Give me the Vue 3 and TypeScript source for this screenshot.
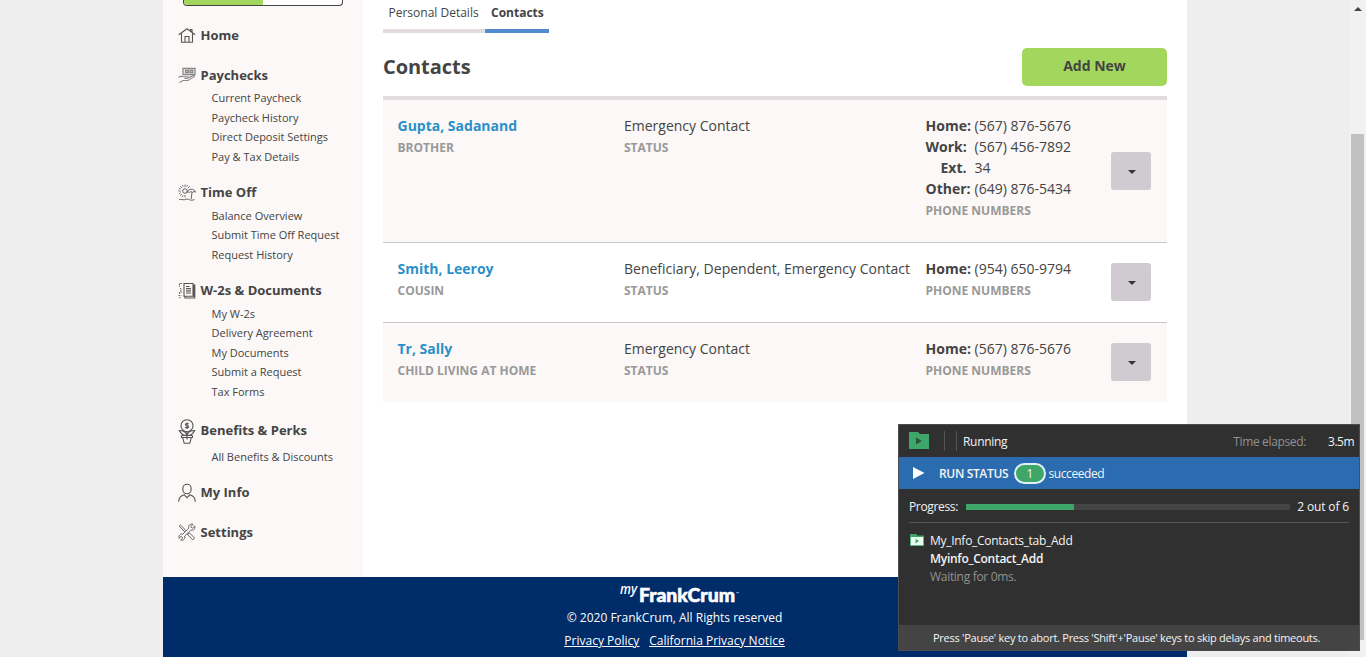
<script setup lang="ts">
interface NavSection { title: string; icon: string; links: string[] }
interface Phone { label: string; value: string; indent?: boolean }
interface Contact { name: string; relation: string; status: string; phones: Phone[] }

const sections: NavSection[] = [
  { title: 'Home', icon: 'home', links: [] },
  { title: 'Paychecks', icon: 'pay', links: ['Current Paycheck', 'Paycheck History', 'Direct Deposit Settings', 'Pay & Tax Details'] },
  { title: 'Time Off', icon: 'time', links: ['Balance Overview', 'Submit Time Off Request', 'Request History'] },
  { title: 'W-2s & Documents', icon: 'docs', links: ['My W-2s', 'Delivery Agreement', 'My Documents', 'Submit a Request', 'Tax Forms'] },
  { title: 'Benefits & Perks', icon: 'perks', links: ['All Benefits & Discounts'] },
  { title: 'My Info', icon: 'info', links: [] },
  { title: 'Settings', icon: 'tools', links: [] },
]

const contacts: Contact[] = [
  {
    name: 'Gupta, Sadanand', relation: 'BROTHER', status: 'Emergency Contact',
    phones: [
      { label: 'Home:', value: '(567) 876-5676' },
      { label: 'Work:', value: '(567) 456-7892' },
      { label: 'Ext.', value: '34', indent: true },
      { label: 'Other:', value: '(649) 876-5434' },
    ],
  },
  { name: 'Smith, Leeroy', relation: 'COUSIN', status: 'Beneficiary, Dependent, Emergency Contact', phones: [{ label: 'Home:', value: '(954) 650-9794' }] },
  { name: 'Tr, Sally', relation: 'CHILD LIVING AT HOME', status: 'Emergency Contact', phones: [{ label: 'Home:', value: '(567) 876-5676' }] },
]
</script>

<template>
  <div class="screen">
    <div class="page">
      <div class="body">
        <aside class="sidebar">
          <div class="toggle"><span></span></div>
          <nav>
            <section v-for="s in sections" :key="s.title" class="group">
              <div class="title" :class="s.icon">
                <svg v-if="s.icon === 'home'" width="18" height="16" viewBox="0 0 18 16"><path d="M.8 7.800 9 1.800l8.200 6M3.500 6.500v8.700h11V6.500M7 15V9.500h4V15M12.500 4V2.500h1.500V5" /></svg>
                <svg v-else-if="s.icon === 'pay'" width="18" height="16" viewBox="0 0 18 16"><path class="gray" d="M5 1.500h12v6H5zM7.500 3.500h2.800v2H7.500zM12 3.500h2.800v2H12z" stroke-width="1.300" /><path class="gray" d="M.5 10.500c2-1.800 3-1.300 5-.8h4c1.500.2 1 1.700-.5 1.700H6.500M10 11l5-2.500c1.500-.5 2 .7.800 1.400L10 13.500H5L1.500 15.500" /></svg>
                <svg v-else-if="s.icon === 'time'" width="18" height="17" viewBox="0 0 18 17"><circle cx="7" cy="7" r="2.300" stroke-width=".9" /><path d="M7 .5v2.500M7 11v2.500M.3 7h2.500M2.200 2.200l1.800 1.800M11.800 2.200 10 4M2.200 11.800 4 10M4.500.9l.8 1.700M9.500.9l-.8 1.700M1 4.400l1.700.8M1 9.600l1.700-.8M4.300 13l.9-1.700" stroke-width=".8" /><path d="M9 8.500c.5-4 7.500-4.500 8.500-.3-1-.8-2-.8-2.800.2-1-1-2.200-1-3 0-1-.7-1.800-.6-2.700.1M14 8l-.8 7M1 15.700c2-1 3.500.5 5.500 0s3.500-1 5 0 3 .3 5 0" stroke-width=".9" /></svg>
                <svg v-else-if="s.icon === 'docs'" width="18" height="17" viewBox="0 0 18 17"><path d="M6 1.500H15v12.800H6zM15 3h1.800v13H7v-1.500M16 3v12" /><path d="M8 4.500h3.500M8 6.700h5M8 8.800h5M8 11h5" stroke-width="1.200" /><path d="M4 1.500H1.500v3.500M2 6.500c2-.5 2 2.500 0 2M4 10H1.500v2M.5 13.500h3M1 15.700h1.500" stroke-width=".9" stroke-dasharray="1.800 .8" /></svg>
                <svg v-else-if="s.icon === 'perks'" width="18" height="26" viewBox="0 0 18 26"><circle cx="9" cy="7.700" r="6" /><path d="M10.700 6C9.600 5.200 7.400 5.300 7.400 6.500s3.200 1 3.200 2.300-2.300 1.400-3.400.5M9 4.500v6.500M9 14v7.500M9 17.500c-3.800.2-5.800-1-7.700-5 3.700-.1 6.600 1 7.700 5Zm0 0c3.800.2 5.800-1 7.700-5-3.700-.1-6.600 1-7.700 5ZM3.500 17.500h3M11.500 17.500h3M3.500 17.500v2h11v-2M4.700 19.700l1.500 5.600h5.600l1.500-5.600" /></svg>
                <svg v-else-if="s.icon === 'info'" width="18" height="20" viewBox="0 0 18 20"><rect x="4.900" y="2.200" width="8.200" height="9.600" rx="4" /><path d="M.7 19.800c0-4.500 2-6 5.600-7l2.700 2.800 2.700-2.800c3.600 1 5.600 2.500 5.600 7" /></svg>
                <svg v-else width="18" height="18" viewBox="0 0 18 18"><path d="M1.200 3.200 2.400 2 7 6.500 8.200 8M9.800 11l1.800-1 5 5-1.800 1.900-5-5zM1.200 3.200 6.800 9M16.700 3l-2.400 2.300-1.600-1.500L15 1.300c-3-.8-5 1.300-4.200 3.800l-6 6C2.400 10.500.3 12.300 1.100 15.300l2.100-2 1.600 1.700-2.100 2c3 .7 4.600-1.300 4-4l6-5.800c3 .5 4.800-1.200 4-4.200Z" stroke-width=".9" /></svg>
                <span>{{ s.title }}</span>
              </div>
              <a v-for="l in s.links" :key="l">{{ l }}</a>
            </section>
          </nav>
        </aside>
        <main>
          <div class="tabs"><span class="tab">Personal Details</span><span class="tab active">Contacts</span></div>
          <header><h1>Contacts</h1><button class="add">Add New</button></header>
          <div class="list">
            <article v-for="c in contacts" :key="c.name">
              <div class="who"><b>{{ c.name }}</b><small>{{ c.relation }}</small></div>
              <div class="status"><p>{{ c.status }}</p><small>STATUS</small></div>
              <div class="phones">
                <p v-for="p in c.phones" :key="p.label"><strong :class="{ indent: p.indent }">{{ p.label }}</strong><span>{{ p.value }}</span></p>
                <small>PHONE NUMBERS</small>
              </div>
              <button class="drop"><i></i></button>
            </article>
          </div>
        </main>
      </div>
      <footer>
        <svg class="logo" width="124" height="24" viewBox="0 0 124 24">
          <text x="1" y="12" class="my" textLength="17" lengthAdjust="spacingAndGlyphs">my</text>
          <text x="20" y="20" class="brand" textLength="96" lengthAdjust="spacingAndGlyphs">FrankCrum</text>
          <text x="117" y="13" class="tm">™</text>
        </svg>
        <div class="copy">© 2020 FrankCrum, All Rights reserved</div>
        <div class="legal"><a>Privacy Policy</a><a>California Privacy Notice</a></div>
      </footer>
    </div>
    <div class="scrollbar"><i class="up"></i><div class="thumb"></div></div>

    <div class="runner">
      <div class="bar">
        <svg width="20" height="17" viewBox="0 0 20 17"><path d="M0 0h9l2 2h9v15H0z" fill="#3fa66a" /><path d="M7 5.500v7l6-3.500z" fill="#28563a" /></svg>
        <i class="sep first"></i><i class="sep"></i>
        <span class="running">Running</span><span class="elapsed">Time elapsed:</span><span class="mins">3.5m</span>
      </div>
      <div class="run-status">
        <svg width="12" height="12" viewBox="0 0 12 12"><path d="M0 0v12l11.500-6z" fill="#fff" /></svg>
        <span class="rs">RUN STATUS</span><span class="count">1</span><span class="ok">succeeded</span>
      </div>
      <div class="progress"><span class="pl">Progress:</span><div class="track"><div></div></div><span class="pc">2 out of 6</span></div>
      <div class="task">
        <svg width="14" height="12" viewBox="0 0 14 12"><path d="M0 0h6l1.500 1.500H14V12H0z" fill="#3fa66a" /><path d="M.8 3h12.400v8.200H.8z" fill="#e9fff0" /><path d="M5.500 4.800v4.600L9 7.100z" fill="#3fa66a" /></svg>
        <div><p class="t1">My_Info_Contacts_tab_Add</p><p class="t2">Myinfo_Contact_Add</p><p class="t3">Waiting for 0ms.</p></div>
      </div>
      <div class="hint"><span>Press 'Pause' key to abort. Press 'Shift'+'Pause' keys to skip delays and timeouts.</span></div>
    </div>
  </div>
</template>

<style>
html, body { margin: 0; overflow: hidden; }
</style>

<style scoped>
* { box-sizing: border-box; }
.screen { position: relative; display: flex; width: 1366px; height: 657px; overflow: hidden; background: #eee; font-family: "Open Sans", sans-serif; color: #444; }
.page { width: 1024px; margin-left: 163px; height: 657px; background: #fff; display: flex; flex-direction: column; }
.body { display: flex; height: 577px; }
p, h1 { margin: 0; }
button { border: 0; padding: 0; font: inherit; color: inherit; }
.sidebar { width: 200px; background: #fbf8f7; }
.toggle { margin-left: 20px; width: 160px; height: 6px; border: 1px solid #444; border-top: 0; border-radius: 0 0 4px 4px; overflow: hidden; background: #fff; }
.toggle span { display: block; width: 79px; height: 6px; background: #a3d65c; }
nav { padding-top: 19.200px; }
.group { padding-bottom: 15.900px; }
.title { display: flex; align-items: center; height: 20px; margin-bottom: 3.600px; padding-left: 15px; font-size: 13px; font-weight: 700; line-height: 20px; white-space: nowrap; }
.title.perks { height: 26px; }
.title svg { flex: none; margin-right: 4.500px; fill: none; stroke: #555; stroke-width: 1.1; }
.title.perks svg { margin: 1px 4.500px 0 0; }
.title .gray { stroke: #888; }
.group a { display: block; height: 19.500px; line-height: 19.500px; padding-left: 48.500px; font-size: 11px; white-space: nowrap; }
main { padding: 0 20px; width: 824px; }
.tabs { display: flex; height: 33px; font-size: 12px; line-height: 26px; }
.tab { width: 102px; padding-left: 5.500px; border-bottom: 4px solid #e3dcde; white-space: nowrap; }
.tab.active { width: 64px; padding-left: 6px; font-weight: 700; border-color: #508ccf; }
header { display: flex; justify-content: space-between; height: 63px; padding-top: 15px; }
h1 { font-size: 20px; line-height: 37px; font-weight: 700; letter-spacing: -.05px; }
.add { width: 145px; height: 38px; border-radius: 5px; background: #a3d65c; font-size: 14px; font-weight: 700; line-height: 34px; padding-bottom: 2px; }
.list { border-top: 4px solid #e3dcde; }
article { display: grid; grid-template-columns: 226.500px 301.500px 185.500px 40px; padding: 15px 0 0 14.500px; height: 80px; border-bottom: 1px solid #c9c7c9; font-size: 14px; line-height: 21px; white-space: nowrap; }
article:nth-child(odd) { background: #fbf8f7; }
article:first-child { height: 143px; }
article:last-child { height: 79px; border-bottom: 0; }
article b { display: block; color: #2b90c8; }
small { display: block; font-size: 12px; font-weight: 700; color: #999; line-height: 22px; padding-top: 1px; }
.phones p { display: flex; }
.phones strong { width: 49px; flex: none; }
.phones strong.indent { padding-left: 15px; }
.drop { width: 40px; height: 38px; margin-top: 5px; border-radius: 3px; background: #d0cbd0; display: flex; align-items: center; justify-content: center; }
article:first-child .drop { margin-top: 37px; }
.drop i { border: 4.500px solid transparent; border-top-color: #333; border-bottom: 0; margin: 1px 0 0 1px; }
footer { height: 80px; background: #002c6a; color: #fff; text-align: center; padding-top: 5px; font-size: 12px; display: flex; flex-direction: column; align-items: center; }
.logo { display: block; flex: none; margin-left: 11px; overflow: visible; }
.logo text { fill: #fff; }
.my { font: italic 600 14px "Open Sans", sans-serif; }
.brand { font: 900 19.5px Lato, sans-serif; stroke: #fff; stroke-width: .6; }
.tm { font: 4px Lato, sans-serif; }
.copy { line-height: 23px; margin-left: -1px; }
.legal { display: flex; gap: 10px; line-height: 23px; margin-left: -1px; text-decoration: underline; }
.legal a { text-decoration: underline; }
.scrollbar { margin-left: auto; width: 17px; height: 657px; background: #f1f1f1; display: flex; flex-direction: column; }
.up { margin: 7px 0 0 5px; width: 0; border: 4px solid transparent; border-bottom-color: #444; border-top: 0; }
.thumb { width: 13px; height: 506px; margin: 123px 0 0 2px; background: #c1c1c1; }
.runner { position: absolute; left: 898px; top: 424px; width: 462px; height: 227px; border: 1px solid #4c4c4c; background: #303030; color: #f4f4f4; font-size: 12px; white-space: nowrap; display: flex; flex-direction: column; }
.bar { height: 32px; display: flex; align-items: center; padding-left: 10px; }
.bar svg { margin-top: -1px; }
.sep { width: 1px; height: 20px; background: #555; margin-right: 11px; }
.sep.first { margin-left: 15px; }
.running { margin-left: -5px; letter-spacing: -.3px; }
.elapsed { margin-left: auto; color: #929292; letter-spacing: -.35px; }
.mins { margin: 0 5px 0 22px; letter-spacing: -.5px; }
.run-status { height: 32px; background: #2b6cb0; display: flex; align-items: center; padding-left: 14px; }
.rs { margin-left: 14px; font-weight: 600; width: 70px; letter-spacing: -.35px; }
.count { margin-left: 5px; width: 32px; height: 21px; border: 2px solid #e3f1f8; border-radius: 11px; background: #3fa66a; text-align: center; line-height: 17px; }
.ok { margin-left: 2.500px; letter-spacing: -.42px; }
.progress { height: 34px; margin: 0 10px; border-bottom: 1px solid #555; display: flex; align-items: center; padding-top: 2px; }
.pl { width: 57px; letter-spacing: -.35px; }
.track { width: 324px; height: 6px; background: #444; }
.track div { width: 108px; height: 6px; background: #3fa66a; }
.pc { margin-left: auto; letter-spacing: -.15px; }
.task { flex: 1; display: flex; padding: 9px 0 0 11px; line-height: 18px; }
.task svg { margin: 2px 6px 0 0; }
.t1 { letter-spacing: -.28px; }
.t2 { font-weight: 600; letter-spacing: -.28px; }
.t3 { color: #929292; letter-spacing: -.3px; }
.hint { height: 25px; background: #444; padding-left: 34px; line-height: 25px; font-size: 11px; letter-spacing: -.26px; }
</style>
